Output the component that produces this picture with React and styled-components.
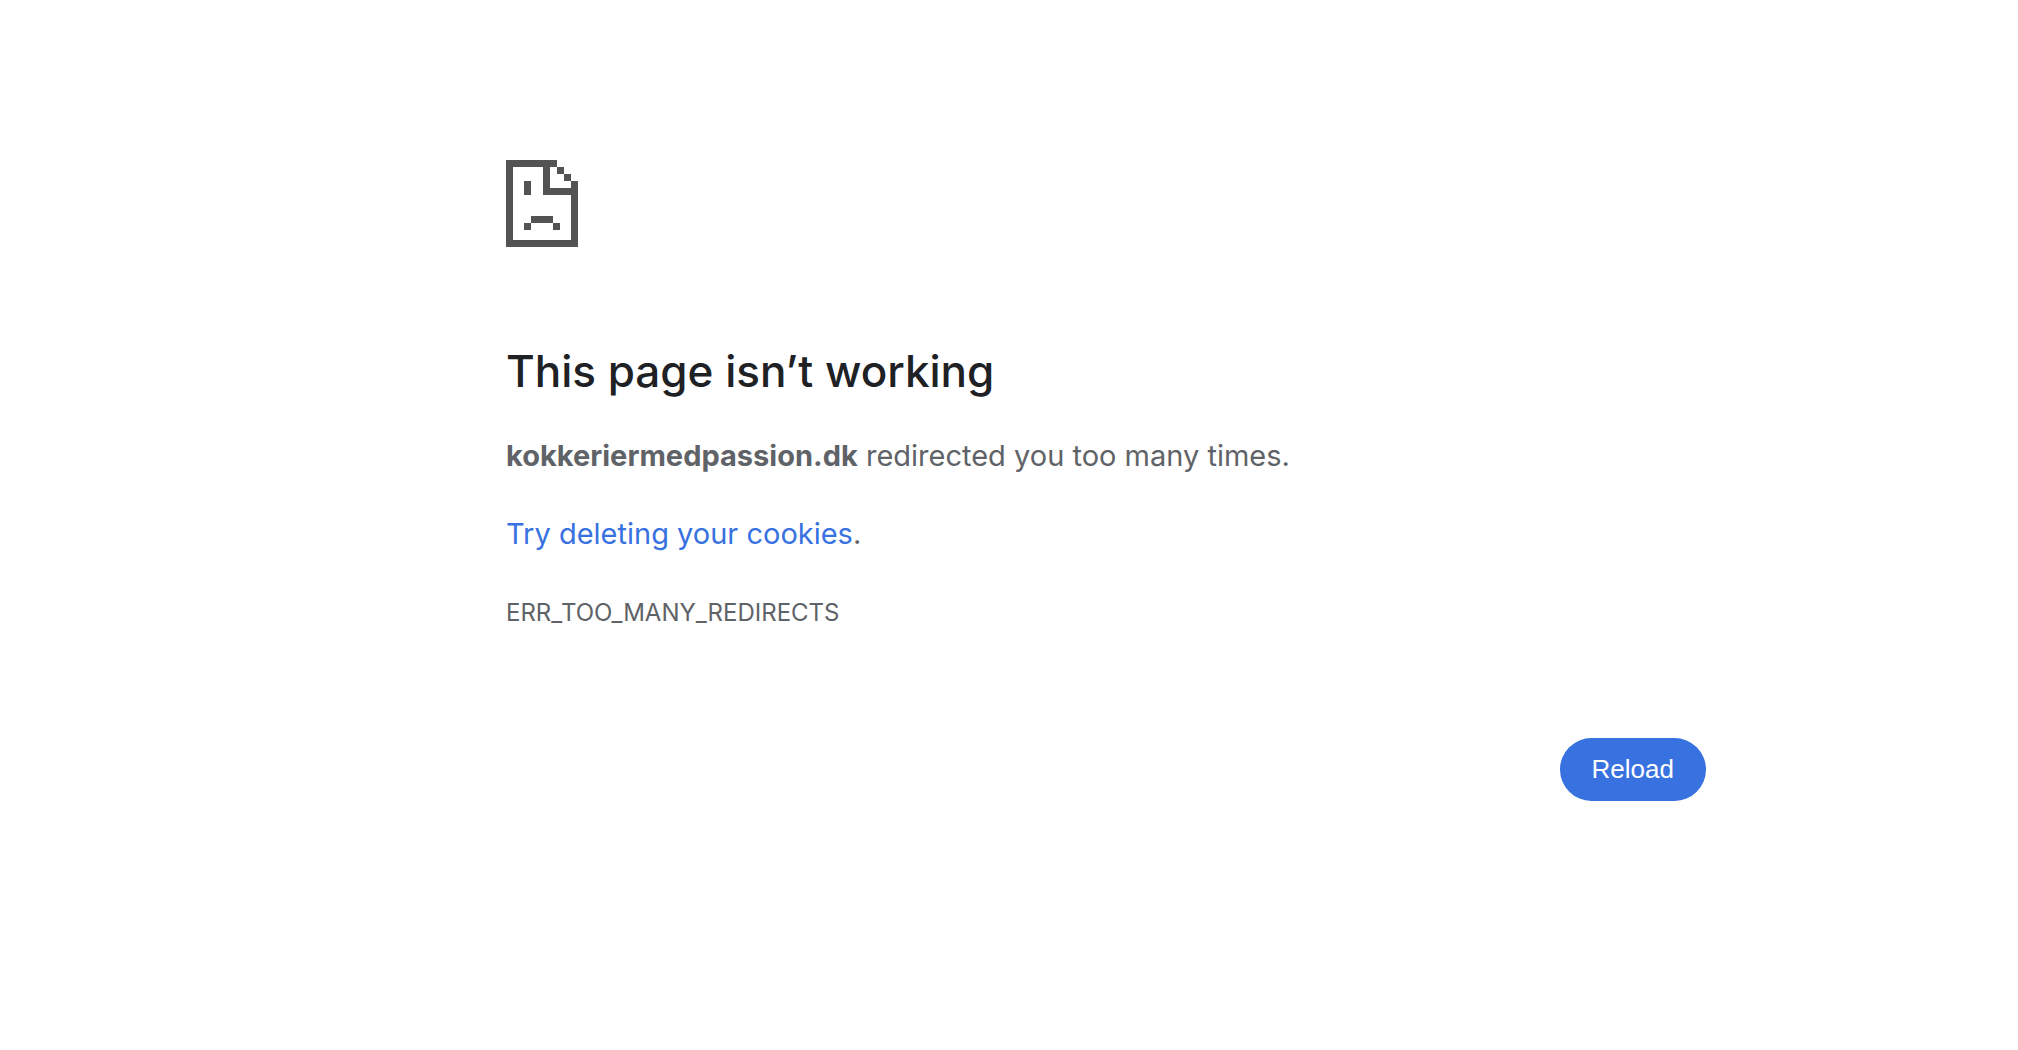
import React from "react";
import styled, { createGlobalStyle } from "styled-components";

const GlobalStyle = createGlobalStyle`
  body {
    margin: 0;
    background: #fff;
    color: #5f6368;
    font-family: Inter, "Liberation Sans", sans-serif;
    font-size: 29px;
    line-height: 48px;
  }
`;

const Page = styled.div`
  display: grid;
  grid-template-columns: 506fr 1200fr 312fr;
  padding-top: 160px;
`;
const Content = styled.main`
  grid-column: 2;
  display: flex;
  flex-direction: column;
`;
const ErrorIcon = styled.svg`
  display: block;
  width: 72px;
  height: 87px;
  margin-bottom: 96px;
  fill: #535353;
`;
const Title = styled.h1`
  margin: 0 0 32px;
  color: #202124;
  font-size: 44px;
  font-weight: 500;
  line-height: 57px;
`;
const Message = styled.p`
  margin: 0 0 30px;
`;
const Host = styled.strong`
  font-weight: 700;
`;
const CookieLink = styled.a`
  color: #3871e0;
  text-decoration: none;
`;
const ErrorCode = styled.div`
  font-size: 24px;
  line-height: 50px;
`;
const Actions = styled.div`
  display: flex;
  justify-content: flex-end;
  margin-top: 100px;
`;
const ReloadButton = styled.button`
  padding: 0 32px;
  border: none;
  border-radius: 32px;
  background: #3871e0;
  color: #fff;
  font-family: "Liberation Sans", Arial, sans-serif;
  font-size: 26px;
  line-height: 63px;
  cursor: pointer;
`;

const SadPageIcon = () => (
  <ErrorIcon viewBox="0 0 72 87" shapeRendering="crispEdges" aria-hidden="true">
    {/* sheet outline */}
    <path d="M0 0H51V7H7V80H65V35H37V7H44V28H65V21H72V87H0Z" />
    {/* folded corner */}
    <path d="M51 7H58V14H51ZM58 14H65V21H58Z" />
    {/* face */}
    <path d="M18 21H25V35H18ZM25 56H47V63H25ZM18 63H25V70H18ZM47 63H54V70H47Z" />
  </ErrorIcon>
);

const App = () => {
  const handleReload = () => {
    window.location.reload();
  };

  return (
    <>
      <GlobalStyle />
      <Page>
        <Content>
          <SadPageIcon />
          <Title>This page isn’t working</Title>
          <Message>
            <Host>kokkeriermedpassion.dk</Host> redirected you too many times.
          </Message>
          <Message>
            <CookieLink href="#cookies">Try deleting your cookies</CookieLink>.
          </Message>
          <ErrorCode>ERR_TOO_MANY_REDIRECTS</ErrorCode>
          <Actions>
            <ReloadButton type="button" onClick={handleReload}>
              Reload
            </ReloadButton>
          </Actions>
        </Content>
      </Page>
    </>
  );
};

export default App;
